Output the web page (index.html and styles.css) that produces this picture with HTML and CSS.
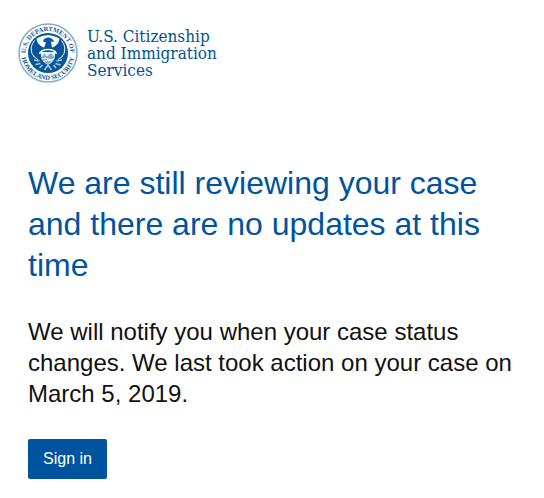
FILE: index.html
```html
<!DOCTYPE html>
<html lang="en">
<head>
<meta charset="utf-8">
<meta name="viewport" content="width=device-width, initial-scale=1">
<title>Case Status</title>
<link rel="stylesheet" href="styles.css">
</head>
<body>
<header class="brand">
  <svg class="seal" viewBox="0 0 120 120" aria-hidden="true">
    <defs>
      <path id="top-arc" d="M21 82 A44.500 44.500 0 1 1 99 82"/>
      <path id="bottom-arc" d="M6.500 60 A53.500 53.500 0 0 0 113.500 60"/>
    </defs>
    <circle cx="60" cy="60" r="58" fill="#fff" stroke="#86a9c9" stroke-width="3"/>
    <circle cx="60" cy="60" r="40" fill="#07559a"/>
    <text class="seal-text"><textPath href="#top-arc" startOffset="50%" text-anchor="middle">U.S. DEPARTMENT OF</textPath></text>
    <text class="seal-text"><textPath href="#bottom-arc" startOffset="50%" text-anchor="middle">HOMELAND SECURITY</textPath></text>
    <path fill="#fff" d="M37 31 Q60 17 83 31 Q81 44 69 49 H51 Q39 44 37 31Z"/>
    <path fill="#07559a" d="M50 37 Q52 29 61 29 Q70 30 72 38 L66 37 L68 50 H52 L56 39Z"/>
    <path fill="none" stroke="#fff" stroke-width="2" d="M33 35 Q23 47 28 61 Q31 69 40 73M87 35 Q97 47 92 61 Q89 69 80 73"/>
    <path fill="none" stroke="#fff" stroke-width="3" d="M43 62 Q46 53 60 53 Q74 53 77 62"/>
    <path fill="#edf4f9" d="M46 58 H74 V67 Q73 77 60 84 Q47 77 46 67Z"/>
    <path fill="#82aaca" d="M47 69 L53 61 L58 67 L66 60 L73 69 Q71 77 60 82 Q49 77 47 69Z"/>
    <path fill="none" stroke="#fff" stroke-width="2" d="M48 72 Q54 68 60 72 T72 71M51 77 Q57 73 69 76"/>
    <path fill="none" stroke="#a9c6de" stroke-width="3" d="M43 76 L32 74M45 81 L35 83M49 84 L43 90M77 76 L88 74M75 81 L85 84M71 84 L76 90M60 84 L53 94M60 84 L67 94"/>
  </svg>
  <div class="wordmark">U.S. Citizenship<br>and Immigration<br>Services</div>
</header>
<main class="status">
  <h1>We are still reviewing your case and there are no updates at this time</h1>
  <p>We will notify you when your case status changes. We last took action on your case on March 5, 2019.</p>
  <button class="sign-in" type="button">Sign in</button>
</main>
</body>
</html>
```
FILE: styles.css
```css
body {
  margin: 0;
  background: #fff;
  color: #111;
  font-family: "Liberation Sans", Arial, sans-serif;
}

.brand {
  display: flex;
  align-items: center;
  gap: 9px;
  padding: 23px 18px 0;
}

.seal {
  flex: none;
  width: 60px;
  height: 60px;
}

.seal-text {
  fill: #07559a;
  font: bold 13px "Liberation Serif", serif;
}

.wordmark {
  color: #005492;
  font: 17px/17px "DejaVu Serif Condensed", "DejaVu Serif", serif;
}

.status {
  padding: 80px 28px 19px;
}

h1 {
  margin: 0 0 30px;
  color: #00549f;
  font-size: 32px;
  font-weight: 400;
  line-height: 41px;
}

p {
  margin: 0 0 30px;
  font-size: 24px;
  line-height: 31px;
}

.sign-in {
  padding: 0 15px;
  border: 0;
  border-radius: 2px;
  background: #00549f;
  color: #fff;
  font: 16px/40px "Liberation Sans", Arial, sans-serif;
  cursor: pointer;
}
```
